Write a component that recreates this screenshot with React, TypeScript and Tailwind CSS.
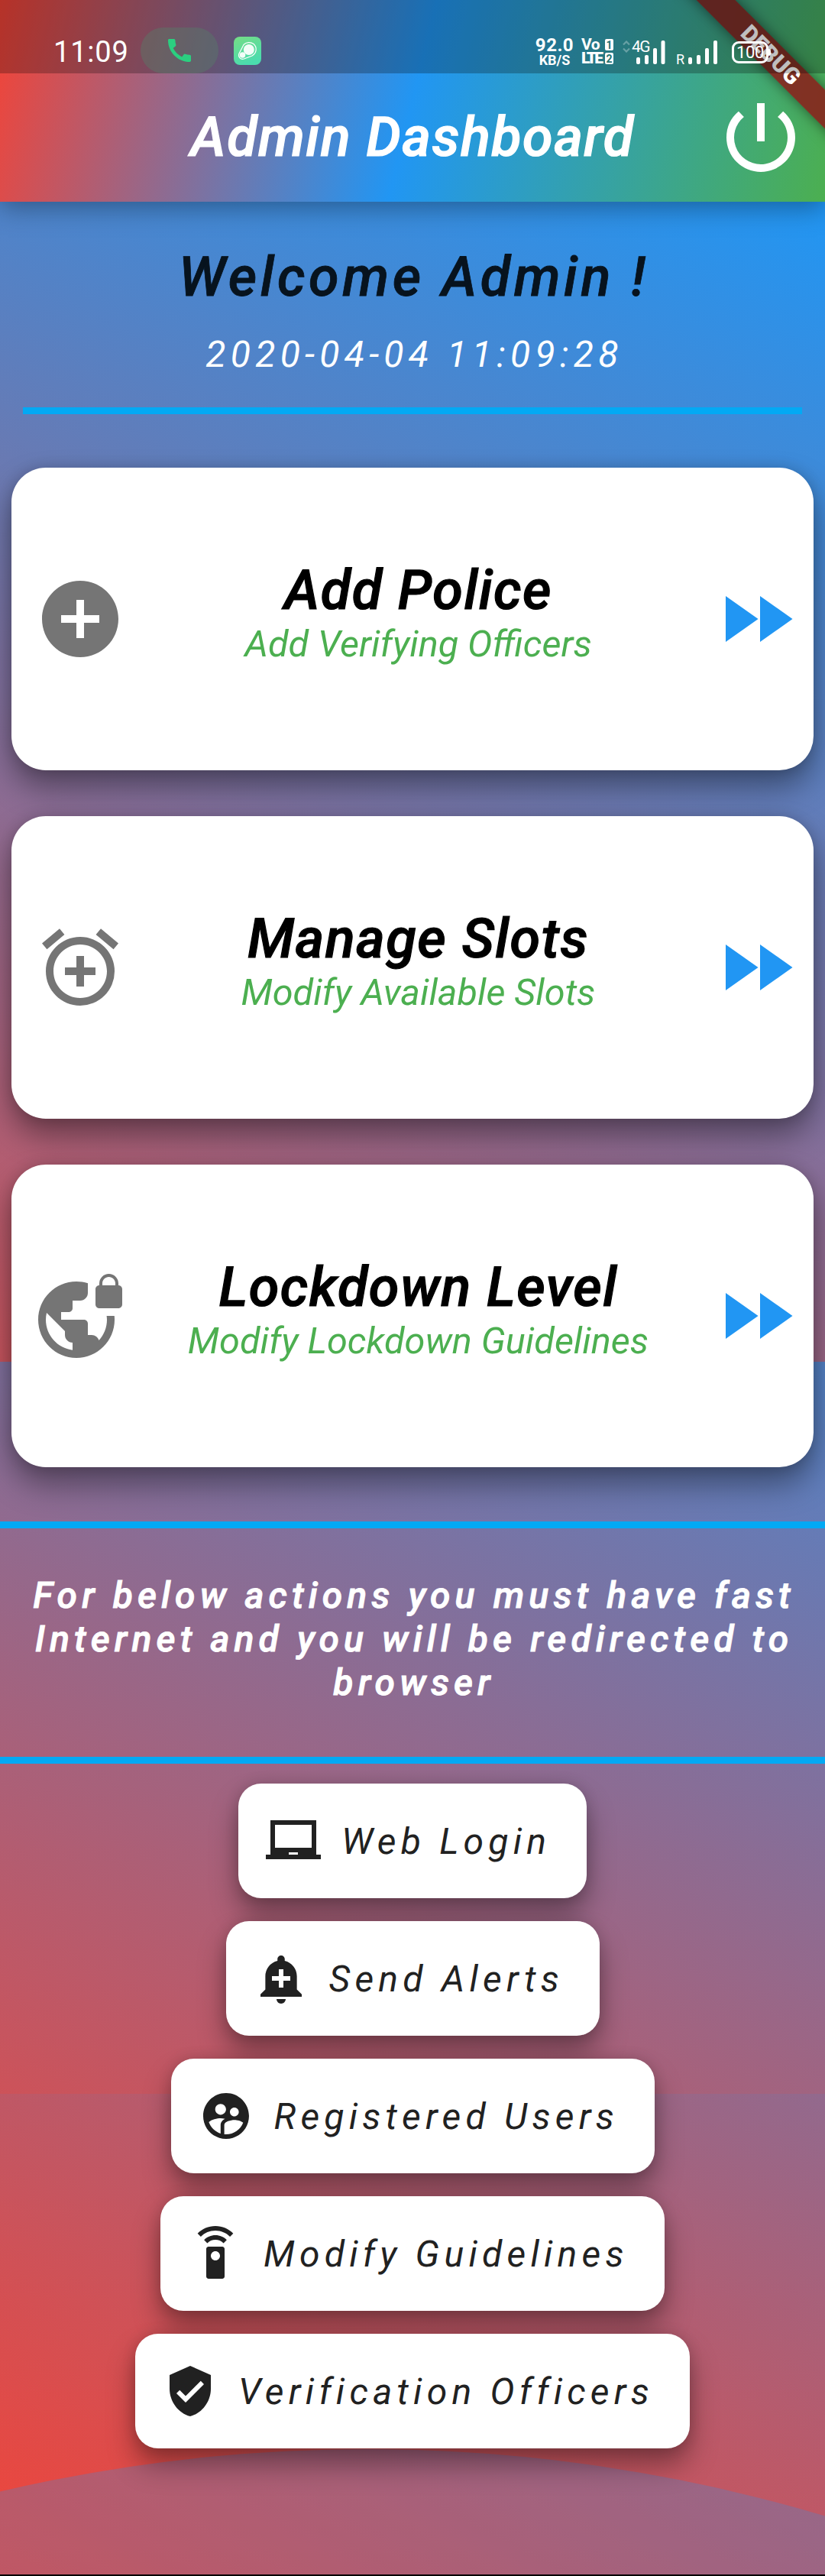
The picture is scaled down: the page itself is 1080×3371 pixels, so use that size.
import type { ReactNode } from "react";
import type { IconType } from "react-icons";
import {
  MdAddAlarm,
  MdAddAlert,
  MdAddCircle,
  MdCall,
  MdFastForward,
  MdLaptopChromebook,
  MdPowerSettingsNew,
  MdSettingsRemote,
  MdSupervisedUserCircle,
  MdVerifiedUser,
  MdVpnLock,
} from "react-icons/md";

type Tile = { icon: IconType; title: string; subtitle: string };
type Action = { icon: IconType; label: string; width: string };

const tiles: Tile[] = [
  { icon: MdAddCircle, title: "Add Police", subtitle: "Add Verifying Officers" },
  { icon: MdAddAlarm, title: "Manage Slots", subtitle: "Modify Available Slots" },
  { icon: MdVpnLock, title: "Lockdown Level", subtitle: "Modify Lockdown Guidelines" },
];

const actions: Action[] = [
  { icon: MdLaptopChromebook, label: "Web Login", width: "w-[456px]" },
  { icon: MdAddAlert, label: "Send Alerts", width: "w-[489px]" },
  { icon: MdSupervisedUserCircle, label: "Registered Users", width: "w-[633px]" },
  { icon: MdSettingsRemote, label: "Modify Guidelines", width: "w-[660px]" },
  { icon: MdVerifiedUser, label: "Verification Officers", width: "w-[726px]" },
];

function Backdrop() {
  return (
    <div className="absolute inset-0 flex flex-col overflow-hidden">
      <div className="h-[1782px] shrink-0 bg-[linear-gradient(207.48deg,#2196f3,#f44336)] bg-[length:1080px_2076px] bg-[position:0px_264px] bg-no-repeat" />
      <div className="h-[958px] shrink-0 bg-[linear-gradient(207.48deg,#2196f3,#f44336)] bg-[length:1080px_2076px] bg-[position:0px_-630px] bg-no-repeat" />
      <div className="h-[629px] shrink-0 bg-[linear-gradient(207.48deg,#2196f3,#f44336)] bg-[length:1080px_2076px] bg-[position:0px_-1415px] bg-no-repeat" />
      <div className="h-[2px] shrink-0 bg-black" />
    </div>
  );
}

function Signal({ roaming }: { roaming?: boolean }) {
  return (
    <svg width="38" height="31" viewBox="0 0 38 31" fill="#fff" className="shrink-0">
      <rect x="0" y={22} width="5" height="9" rx="2" />
      <rect x="11" y={19} width="5" height="12" rx="2" />
      <rect x="22" y={10} width="5" height="21" rx="2" />
      <rect x={roaming ? 33 : 32.5} y="0" width="5" height="31" rx="2" />
    </svg>
  );
}

function SimBadge({ children }: { children: ReactNode }) {
  return (
    <span className="flex h-[15px] w-[11px] items-center justify-center rounded-[2px] bg-white text-[14px] leading-none font-bold text-[#26726f]">
      {children}
    </span>
  );
}

function StatusBar() {
  return (
    <div className="absolute inset-x-0 top-0 h-24 bg-black/25 text-white">
      <div className="flex h-24 pt-9">
        <div className="ml-[70px] h-[60px] w-[114px] text-[38px] leading-[64px] tracking-[0.8px]">11:09</div>
        <div className="flex h-[60px] w-[102px] items-center justify-center rounded-full bg-[#548068]/40">
          <MdCall className="size-10 text-[#2bcf80]" />
        </div>
        <svg width="36" height="37" viewBox="0 0 36 37" className="mt-3 ml-5">
          <defs>
            <linearGradient id="app" x1="0" y1="0" x2="0.4" y2="1">
              <stop offset="0" stopColor="#76dd86" />
              <stop offset="1" stopColor="#4bdcae" />
            </linearGradient>
          </defs>
          <rect width="36" height="37" rx="8" fill="url(#app)" />
          <path
            d="M13 10.5C16 7 22 6.500 26 9.500C31 14 30 21.500 24 25L13.500 29C9 30.500 5.500 26.500 6.800 22.500Z"
            fill="none"
            stroke="#fff"
            strokeWidth="1.200"
          />
          <circle cx="19.800" cy="17" r="7" fill="#fff" fillOpacity="0.930" />
          <circle cx="11.500" cy="24" r="3.800" fill="#fff" fillOpacity="0.930" />
        </svg>
        <div className="ml-[358px] flex w-[52px] flex-col items-center pt-[12px] font-bold">
          <span className="text-[24px] leading-[22px] tracking-[0.5px]">92.0</span>
          <span className="text-[18px] leading-[18px]">KB/S</span>
        </div>
        <div className="ml-[9px] flex w-[42px] flex-col gap-[3px] pt-[15px] font-bold">
          <div className="flex h-[15px] items-center justify-between">
            <span className="text-[21px] leading-none tracking-[-0.5px]">Vo</span>
            <SimBadge>1</SimBadge>
          </div>
          <div className="flex h-[15px] items-center justify-between">
            <span className="text-[21px] leading-none font-black tracking-[-2.600px]">LTE</span>
            <SimBadge>2</SimBadge>
          </div>
        </div>
        <svg width="10" height="16" viewBox="0 0 10 16" fill="none" stroke="#fff" strokeOpacity="0.3" strokeWidth="2.200" className="mt-[17px] ml-[12px] shrink-0">
          <path d="M1 5.500L5 1.500L9 5.500M1 10.500L5 14.500L9 10.500" />
        </svg>
        <span className="mt-[14px] ml-[2px] w-[6px] text-[21px] leading-[22px] tracking-[-1.500px] whitespace-nowrap">4G</span>
        <div className="mt-[17px]">
          <Signal />
        </div>
        <span className="mt-[32px] ml-[14px] w-[16px] text-[18px] leading-[20px]">R</span>
        <div className="mt-[17px]">
          <Signal roaming />
        </div>
        <div className="mt-[18px] ml-[19px] flex h-[29px] w-[48px] items-center justify-center rounded-[9px] border-[3px] border-white text-[22px] leading-none tracking-[-0.3px]">
          100
        </div>
        <div className="mt-[28px] h-[9px] w-[3px] rounded-r bg-white" />
      </div>
    </div>
  );
}

function DebugBanner() {
  return (
    <div className="absolute top-0 right-0 size-[200px] overflow-hidden">
      <div className="absolute top-[54px] left-[-21px] flex h-9 w-[300px] rotate-45 items-center justify-center bg-[#8d1616]/82 text-[30px] leading-none font-black text-white shadow-[0_0_18px_rgba(0,0,0,0.5)]">
        DEBUG
      </div>
    </div>
  );
}

function Header() {
  return (
    <header className="relative h-[264px] bg-[linear-gradient(103.74deg,#f44336,#2196f3,#4caf50)] pt-24 shadow-[0_8px_32px_rgba(0,0,0,0.34)]">
      <div className="grid h-[168px] grid-cols-[144px_1fr_144px] items-center">
        <span />
        <h1 className="text-center text-[72px] leading-[84px] font-medium tracking-[1.5px] whitespace-nowrap text-white italic [-webkit-text-stroke:1.2px_#fff]">
          Admin Dashboard
        </h1>
        <MdPowerSettingsNew className="size-[120px] text-white" />
      </div>
      <DebugBanner />
      <StatusBar />
    </header>
  );
}

function TileCard({ icon: Icon, title, subtitle }: Tile) {
  return (
    <div className="flex h-[396px] items-center rounded-[45px] bg-white pr-[15px] pl-[30px] shadow-[0_22px_42px_rgba(0,0,0,0.4),0_0_18px_rgba(0,0,0,0.14)]">
      <Icon className="size-[120px] shrink-0 text-[#757575]" />
      <div className="flex-1 pb-[18px] text-center whitespace-nowrap italic">
        <div className="text-[72px] leading-[84px] font-medium tracking-[1.5px] text-black [-webkit-text-stroke:1.2px_#000]">
          {title}
        </div>
        <div className="text-[48.6px] leading-[56px] text-[#4caf50]">{subtitle}</div>
      </div>
      <MdFastForward className="size-[120px] shrink-0 text-[#2196f3]" />
    </div>
  );
}

function ActionButton({ icon: Icon, label, width }: Action) {
  return (
    <button
      className={`flex h-[150px] items-center gap-[27px] rounded-[30px] bg-white pl-9 text-[#212121] shadow-[0_22px_36px_rgba(0,0,0,0.36),0_0_18px_rgba(0,0,0,0.14)] ${width}`}
    >
      <Icon className="size-[72px] shrink-0" />
      <span className="pt-[2px] text-[48px] leading-[56px] tracking-[6.25px] whitespace-nowrap italic">{label}</span>
    </button>
  );
}

export default function App() {
  return (
    <div className="relative h-[3371px] w-[1080px] overflow-hidden font-['Roboto',sans-serif]">
      <Backdrop />
      {/* overscroll glow at the foot of the list */}
      <div className="absolute inset-x-0 top-[3205px] h-[164px] bg-[#2196f3]/24 [clip-path:circle(2100px_at_480px_2100px)]" />
      <div className="relative">
        <Header />
        <section className="mt-[57px] text-center whitespace-nowrap italic">
          <h2 className="pl-[3px] text-[72px] leading-[84px] font-medium tracking-[4.55px] text-[#07131e] [-webkit-text-stroke:0.8px_#07131e]">
            Welcome Admin !
          </h2>
          <p className="mt-[31px] pl-[5px] text-[48px] leading-[56px] tracking-[6.3px] text-white">2020-04-04 11:09:28</p>
          <div className="mx-[30px] mt-[41px] h-[9px] bg-[#03a9f4]" />
        </section>
        <section className="mt-[70px] flex flex-col gap-[60px] px-[15px]">
          {tiles.map((tile) => (
            <TileCard key={tile.title} {...tile} />
          ))}
        </section>
        <div className="mt-[71px] h-[9px] bg-[#03a9f4]" />
        <p className="pt-[59px] pr-4 pl-5 pb-[69px] text-center text-[48px] leading-[57px] font-medium tracking-[6.15px] text-white italic [-webkit-text-stroke:0.9px_#fff]">
          For below actions you must have fast
          <br />
          Internet and you will be redirected to
          <br />
          browser
        </p>
        <div className="h-[9px] bg-[#03a9f4]" />
        <section className="mt-[26px] flex flex-col items-center gap-[30px]">
          {actions.map((action) => (
            <ActionButton key={action.label} {...action} />
          ))}
        </section>
      </div>
    </div>
  );
}
